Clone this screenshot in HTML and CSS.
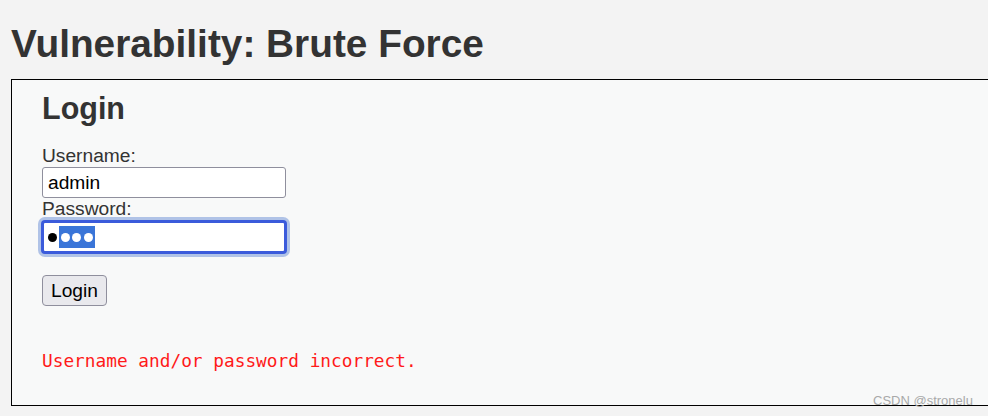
FILE: index.html
```html
<!DOCTYPE html>
<html>
<head>
<meta charset="utf-8">
<title>Vulnerability: Brute Force</title>
<link rel="stylesheet" href="styles.css">
</head>
<body>
<div class="page">
  <h1 class="title">Vulnerability: Brute Force</h1>
  <div class="vulnerable">
    <form class="login-form">
      <h2 class="form-title">Login</h2>
      <label class="field-label">Username:</label>
      <div class="text-input">admin</div>
      <label class="field-label">Password:</label>
      <div class="text-input pwd-input">
        <span class="dot dot-dark"></span><span class="selection"><span class="dot dot-light"></span><span class="dot dot-light"></span><span class="dot dot-light"></span></span>
      </div>
      <div class="btn-row"><span class="login-btn">Login</span></div>
    </form>
    <pre class="error-msg">Username and/or password incorrect.</pre>
  </div>
</div>
<div class="watermark">CSDN @stronelu</div>
</body>
</html>
```
FILE: styles.css
```css
html, body {
  margin: 0;
  padding: 0;
  background: #f3f3f3;
  overflow: hidden;
}
body {
  width: 988px;
  height: 416px;
  position: relative;
  font-family: "Liberation Sans", Arial, sans-serif;
  color: #333;
}
.page {
  padding-left: 11px;
}
.title {
  margin: 21px 0 13px 0;
  font-size: 38.8px;
  line-height: 45px;
  font-weight: bold;
  color: #333;
}
.vulnerable {
  width: 1000px;
  border: 1px solid #000;
  background: #f8f9f9;
  padding: 11px 0 34px 30px;
  box-sizing: border-box;
  height: 327px;
}
.login-form {
  display: flex;
  flex-direction: column;
  align-items: flex-start;
}
.form-title {
  margin: 0 0 20px 0;
  font-size: 30.5px;
  line-height: 34px;
  font-weight: bold;
  color: #333;
}
.field-label {
  font-size: 19.2px;
  line-height: 22px;
  height: 22px;
  color: #333;
}
.text-input {
  box-sizing: border-box;
  width: 244px;
  height: 31px;
  border: 1px solid #8f8f9d;
  border-radius: 3px;
  background: #fff;
  padding: 0 5px;
  font-size: 19.2px;
  line-height: 29px;
  color: #000;
}
.pwd-input {
  display: flex;
  align-items: center;
  border: 2px solid #3b5bdb;
  padding-left: 4px;
  border-radius: 3px;
  box-shadow: 0 0 0 1px #3b5bdb, 0 0 0 4px #b0c3e7;
  margin-top: 1px;
  height: 32px;
}
.dot {
  display: inline-block;
  width: 9px;
  height: 9px;
  border-radius: 50%;
}
.dot-dark {
  background: #000;
  margin-right: 1.5px;
}
.selection {
  display: inline-flex;
  align-items: center;
  gap: 2.5px;
  height: 22px;
  padding: 0 2.5px 0 2px;
  background: #3a75d8;
}
.dot-light {
  background: #fff;
}
.btn-row {
  margin-top: 22px;
}
.login-btn {
  display: inline-block;
  box-sizing: border-box;
  height: 31px;
  padding: 0 8px;
  border: 1px solid #8f8f9d;
  border-radius: 4px;
  background: #e9e9ed;
  font-size: 19.2px;
  line-height: 29px;
  color: #000;
}
.error-msg {
  margin: 44px 0 0 0;
  font-family: "DejaVu Sans Mono", "Liberation Mono", monospace;
  font-size: 17.8px;
  line-height: 21px;
  color: #ff1a1a;
}
.watermark {
  position: absolute;
  left: 873px;
  top: 393px;
  font-size: 13px;
  line-height: 15px;
  color: #a9a9a9;
  font-family: "Liberation Sans", Arial, sans-serif;
}
```
